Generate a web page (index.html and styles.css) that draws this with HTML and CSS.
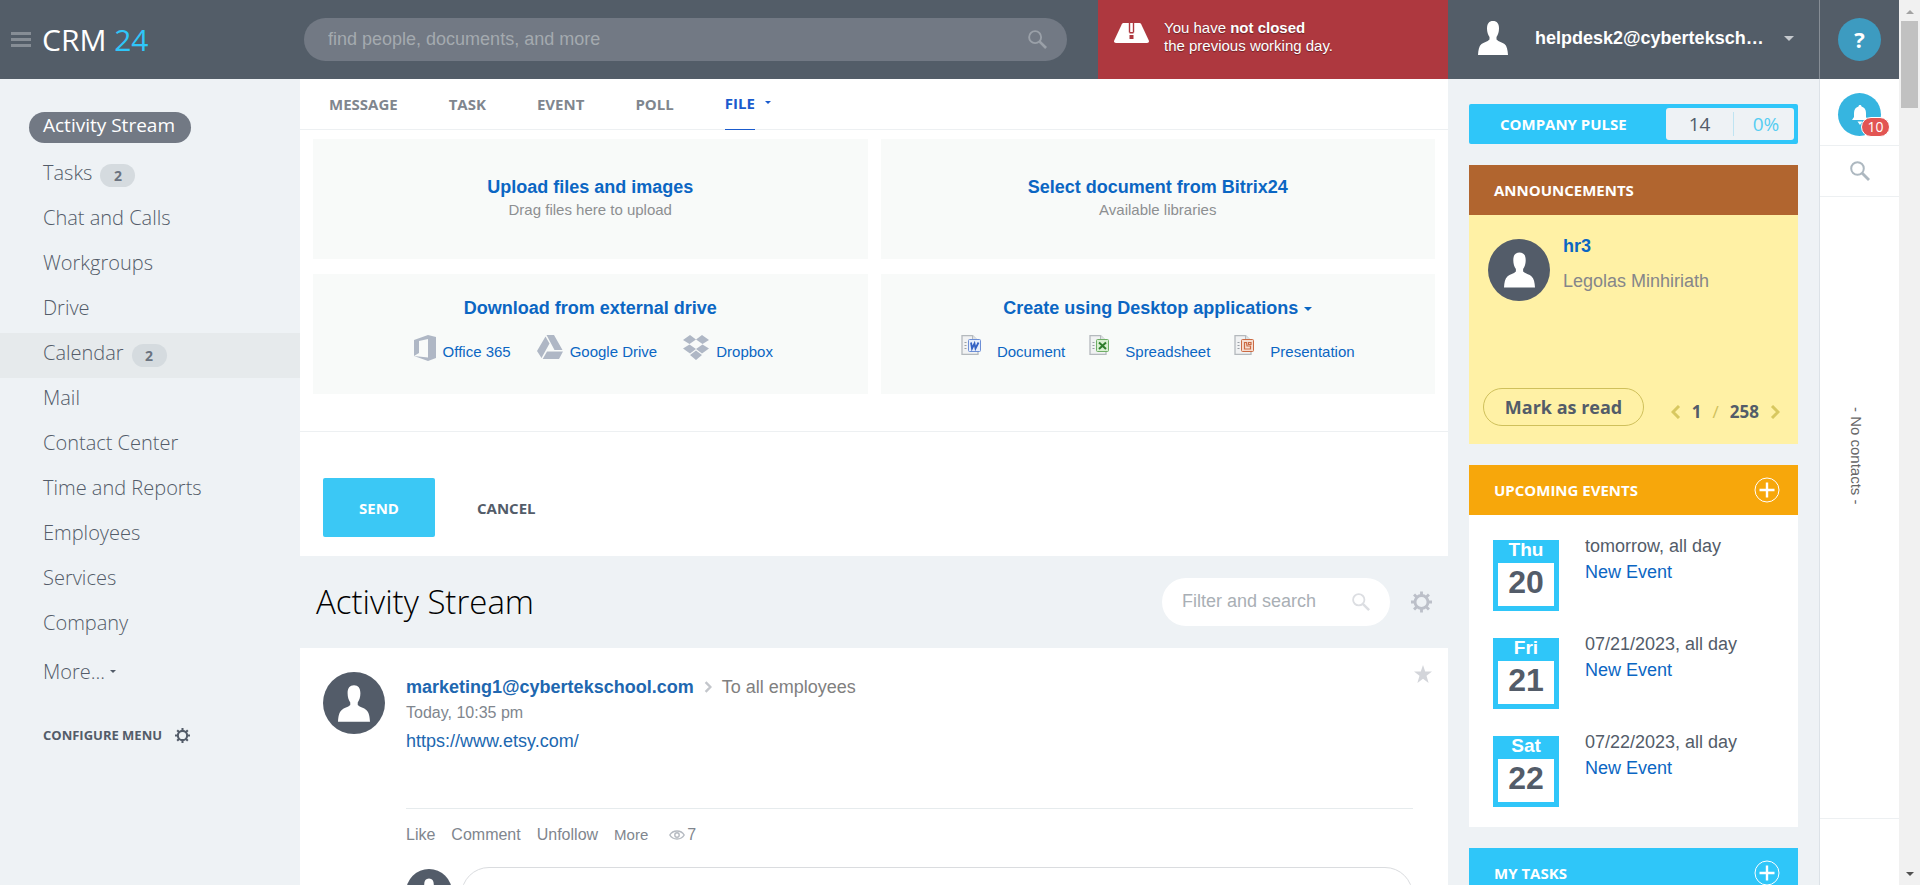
FILE: index.html
```html
<!DOCTYPE html>
<html lang="en">
<head>
<meta charset="utf-8">
<title>Activity Stream</title>
<link rel="stylesheet" href="styles.css">
</head>
<body>
<svg class="defs" width="0" height="0" aria-hidden="true">
  <symbol id="person" viewBox="0 0 30 34"><path d="M9 7.500C9 2.500 11 0 15 0s6 2.500 6 7.500c0 3.500-1 6.500-2.500 8.500v2.500c2 2.200 6 2.800 8 4.500 2.500 2 3.200 6 3.500 11H0c.3-5 1-9 3.500-11 2-1.700 6-2.300 8-4.500V16C10 14 9 11 9 7.500z" fill="#fff"/></symbol>
  <symbol id="glass" viewBox="0 0 20 20"><circle cx="7.500" cy="7.500" r="6.300" fill="none" stroke="currentColor" stroke-width="2"/><path d="M12 12l7 7" stroke="currentColor" stroke-width="2.800"/></symbol>
  <symbol id="gear" viewBox="0 0 22 22"><path d="M11 0v22M0 11h22M3.200 3.200l15.600 15.600M18.800 3.200L3.200 18.800" stroke="currentColor" stroke-width="3"/><circle cx="11" cy="11" r="6.800" fill="var(--page)" stroke="currentColor" stroke-width="3"/></symbol>
  <symbol id="plus" viewBox="0 0 26 26"><circle cx="13" cy="13" r="12" fill="none" stroke="#fff"/><path d="M13 5.500v15M5.500 13h15" stroke="#fff" stroke-width="2.400"/></symbol>
  <symbol id="caret" viewBox="0 0 8 4"><path d="M0 0h8L4 4z" fill="currentColor"/></symbol>
  <symbol id="next" viewBox="0 0 10 14"><path d="M2 1l6 6-6 6" fill="none" stroke="currentColor" stroke-width="3"/></symbol>
  <symbol id="sheet" viewBox="0 0 18 20"><path d="M1 .5h10.500L17 6v13.500H1z" fill="#f1f2f3" stroke="#b4b9bd" stroke-width="1.300"/><path d="M11.500.5V5H17" fill="#dfe2e4" stroke="#b4b9bd"/><path d="M3.500 7.500h2M3.500 10.500h2M3.500 13.500h2" stroke="#9aa0a6"/></symbol>
</svg>

<div class="app">
  <header class="top">
    <div class="brand">
      <button class="burger" aria-label="Toggle menu"><span></span><span></span><span></span></button>
      <a class="logo" href="#">CRM <span>24</span></a>
    </div>
    <div class="top-search">
      <label class="search-pill">
        <input type="text" placeholder="find people, documents, and more" aria-label="Search">
        <svg width="19" height="19"><use href="#glass"/></svg>
      </label>
    </div>
    <a class="alert" href="#">
      <svg class="alert-ico" width="35" height="20" viewBox="0 0 35 20"><path d="M9.500 0h16c.8 0 1.300.4 1.700 1.200l7.500 16c.7 1.600 0 2.800-1.700 2.800H2C.3 20-.4 18.800.3 17.200l7.500-16C8.200.4 8.700 0 9.500 0z" fill="#fff"/><path d="M14.800 0h1.400v9.500h-1.400zM18.800 0h1.400v9.500h-1.400zM15.500 9h4v1.500h-4zM15.500 12h4v4h-4z" fill="#ae383f"/></svg>
      <span>You have <b>not closed</b><br>the previous working day.</span>
    </a>
    <button class="user">
      <svg width="30" height="34"><use href="#person"/></svg>
      <span class="user-name">helpdesk2@cyberteksch…</span>
      <svg class="user-caret" width="10" height="5"><use href="#caret"/></svg>
    </button>
    <div class="help-cell"><button class="help" aria-label="Help">?</button></div>
  </header>

  <div class="columns">
    <nav class="menu">
      <ul>
        <li class="active"><a href="#">Activity Stream</a></li>
        <li><a href="#">Tasks</a><span class="count">2</span></li>
        <li><a href="#">Chat and Calls</a></li>
        <li><a href="#">Workgroups</a></li>
        <li><a href="#">Drive</a></li>
        <li class="hover"><a href="#">Calendar</a><span class="count">2</span></li>
        <li><a href="#">Mail</a></li>
        <li><a href="#">Contact Center</a></li>
        <li><a href="#">Time and Reports</a></li>
        <li><a href="#">Employees</a></li>
        <li><a href="#">Services</a></li>
        <li><a href="#">Company</a></li>
        <li class="more"><a href="#">More...</a><svg width="6" height="3"><use href="#caret"/></svg></li>
      </ul>
      <button class="configure">CONFIGURE MENU <svg width="15" height="15"><use href="#gear"/></svg></button>
    </nav>

    <main class="feed">
      <section class="composer">
        <div class="tabs">
          <button>MESSAGE</button>
          <button>TASK</button>
          <button>EVENT</button>
          <button>POLL</button>
          <button class="on">FILE</button>
          <svg class="tab-caret" width="6" height="3"><use href="#caret"/></svg>
        </div>
        <div class="sources">
          <div class="source tall">
            <a class="source-title" href="#">Upload files and images</a>
            <span class="hint">Drag files here to upload</span>
          </div>
          <div class="source tall">
            <a class="source-title" href="#">Select document from Bitrix24</a>
            <span class="hint">Available libraries</span>
          </div>
          <div class="source">
            <a class="source-title" href="#">Download from external drive</a>
            <div class="links drives">
              <a href="#"><svg width="22" height="26" viewBox="0 0 22 26"><path d="M0 5L14 0l8 2v21l-8 3L0 21l14 1.500V4L5 6v12l-5 3z" fill="#afb7c5"/></svg>Office 365</a>
              <a href="#"><svg width="26" height="24" viewBox="0 0 26 24"><path d="M9.500 0h7.500l8.500 15h-8zM8.500 1.500l4 7L4.500 23 0 16zM10 16.500h16L22 24H5.700z" fill="#afb7c5"/></svg>Google Drive</a>
              <a href="#"><svg width="26" height="25" viewBox="0 0 26 25"><path d="M7 0l6 4.500-6.500 4.500L0 5zM19 0l7 5-6.500 4L13 4.500zM0 13.500L6.500 9.500 13 14l-6 4.500zM19.500 9.500l6.500 4-7 5-6-4.500zM13 15.500l6 4.500-6 5-6-5z" fill="#afb7c5"/></svg>Dropbox</a>
            </div>
          </div>
          <div class="source">
            <a class="source-title" href="#">Create using Desktop applications <svg width="8" height="4"><use href="#caret"/></svg></a>
            <div class="links docs">
              <a href="#"><svg width="20" height="20" viewBox="0 0 20 20"><use href="#sheet" width="18" height="20"/><rect x="7.500" y="4.500" width="12" height="12" rx="1" fill="#e8eefb" stroke="#6d8fd6"/><path d="M10 7.500l1 6 2.500-5 1 5 3-6" fill="none" stroke="#3562c4" stroke-width="1.800"/></svg>Document</a>
              <a href="#"><svg width="20" height="20" viewBox="0 0 20 20"><use href="#sheet" width="18" height="20"/><rect x="7.500" y="4.500" width="12" height="12" rx="1" fill="#d9efd2" stroke="#6fae66"/><path d="M10 7.500l7 6.500M17 7.500L10 14" fill="none" stroke="#2f7d2c" stroke-width="2"/></svg>Spreadsheet</a>
              <a href="#"><svg width="20" height="20" viewBox="0 0 20 20"><use href="#sheet" width="18" height="20"/><rect x="7.500" y="4.500" width="12" height="12" rx="1" fill="#f6ddd0" stroke="#cb6a43"/><path d="M12.500 7.500h-2v6.500h6v-3h-3.500zM14.500 7.500h2.500v2h-2.500z" fill="none" stroke="#cb6a43" stroke-width="1.200"/></svg>Presentation</a>
            </div>
          </div>
        </div>
        <div class="send-row">
          <button class="send">SEND</button>
          <button class="cancel">CANCEL</button>
        </div>
      </section>

      <div class="feed-head">
        <h1>Activity Stream</h1>
        <label class="filter">
          <input type="text" placeholder="Filter and search" aria-label="Filter and search">
          <svg width="18" height="18"><use href="#glass"/></svg>
        </label>
        <button class="gear" aria-label="Settings"><svg width="21" height="22"><use href="#gear"/></svg></button>
      </div>

      <article class="post">
        <span class="avatar"><svg width="32" height="39"><use href="#person"/></svg></span>
        <div class="post-body">
          <div class="post-title"><a href="#">marketing1@cybertekschool.com</a><svg width="8" height="12"><use href="#next"/></svg><span>To all employees</span></div>
          <div class="post-time">Today, 10:35 pm</div>
          <a class="post-link" href="#">https://www.etsy.com/</a>
          <div class="post-actions">
            <a href="#">Like</a><a href="#">Comment</a><a href="#">Unfollow</a><a class="small" href="#">More</a>
            <span class="views"><svg width="16" height="10" viewBox="0 0 16 10"><path d="M.8 5C4-.4 12-.4 15.200 5 12 10.400 4 10.400.8 5z" fill="none" stroke="#b5bac1" stroke-width="1.400"/><circle cx="8" cy="5" r="2.200" fill="none" stroke="#b5bac1" stroke-width="1.400"/></svg>7</span>
          </div>
          <div class="reply">
            <span class="avatar mini"><svg width="24" height="28"><use href="#person"/></svg></span>
            <input type="text" aria-label="Add comment">
          </div>
        </div>
        <button class="star" aria-label="Add to favorites"><svg width="18" height="18" viewBox="0 0 18 18"><path d="M9 0l2.200 6.500H18l-5.500 4.200L14.600 18 9 13.700 3.400 18l2.100-7.300L0 6.500h6.800z" fill="#d3d5da"/></svg></button>
      </article>
    </main>

    <aside class="widgets">
      <section class="pulse">
        <span class="pulse-name">COMPANY PULSE</span>
        <span class="pulse-box"><b>14</b><i>0%</i></span>
      </section>
      <section class="widget">
        <h2 class="brown">ANNOUNCEMENTS</h2>
        <div class="note">
          <div class="note-from">
            <span class="avatar"><svg width="31" height="36"><use href="#person"/></svg></span>
            <div><a href="#">hr3</a><p>Legolas Minhiriath</p></div>
          </div>
          <div class="note-foot">
            <button class="mark">Mark as read</button>
            <div class="pager">
              <button aria-label="Previous"><svg class="flip" width="10" height="14"><use href="#next"/></svg></button>
              <span>1</span><em>/</em><span>258</span>
              <button aria-label="Next"><svg width="10" height="14"><use href="#next"/></svg></button>
            </div>
          </div>
        </div>
      </section>
      <section class="widget">
        <h2 class="orange">UPCOMING EVENTS <button aria-label="Add event"><svg width="26" height="26"><use href="#plus"/></svg></button></h2>
        <div class="events">
          <div class="event"><div class="cal"><span>Thu</span><b>20</b></div><div class="event-text"><p>tomorrow, all day</p><a href="#">New Event</a></div></div>
          <div class="event"><div class="cal"><span>Fri</span><b>21</b></div><div class="event-text"><p>07/21/2023, all day</p><a href="#">New Event</a></div></div>
          <div class="event"><div class="cal"><span>Sat</span><b>22</b></div><div class="event-text"><p>07/22/2023, all day</p><a href="#">New Event</a></div></div>
        </div>
      </section>
      <section class="widget">
        <h2 class="blue">MY TASKS <button aria-label="Add task"><svg width="26" height="26"><use href="#plus"/></svg></button></h2>
      </section>
    </aside>

    <aside class="im">
      <div class="im-bell">
        <button class="bell" aria-label="Notifications"><svg width="16" height="20" viewBox="0 0 16 20"><path d="M8 0c1 0 1.500.7 1.500 1.500C12.500 2.300 14 4.800 14 8v4l2 3H0l2-3V8c0-3.200 1.500-5.700 4.500-6.500C6.500.7 7 0 8 0zM5.500 16.500h5L8 20z" fill="#fff"/></svg></button>
        <span class="badge">10</span>
      </div>
      <button class="im-search" aria-label="Search contacts"><svg width="20" height="20"><use href="#glass"/></svg></button>
      <div class="im-list"><span>- No contacts -</span></div>
      <div class="im-foot"></div>
    </aside>
  </div>
</div>
<div class="scroll" aria-hidden="true">
  <svg class="arrow-up" width="8" height="4"><use href="#caret"/></svg>
  <span class="thumb"></span>
  <svg class="arrow-down" width="8" height="4"><use href="#caret"/></svg>
</div>
</body>
</html>
```
FILE: styles.css
```css
:root {
  --page: #eef2f5;
  --slate: #535c69;
  --head: #535d68;
  --sky: #2fc6f9;
  --link: #0b66c3;
  --line: #edf0f2;
  --sans: "Liberation Sans", Arial, sans-serif;
  --open: "Open Sans", sans-serif;
}
* { box-sizing: border-box; }
body {
  margin: 0;
  height: 100vh;
  display: flex;
  overflow: hidden;
  background: var(--page);
  font: 18px/20px var(--sans);
  color: var(--slate);
}
a { color: var(--link); text-decoration: none; }
button { border: 0; padding: 0; background: none; font: inherit; color: inherit; }
input { border: 0; padding: 0; background: none; font: inherit; outline: 0; min-width: 0; }
p { margin: 0; }
svg { display: block; flex: none; }
.defs { position: absolute; }
.app { flex: 1; min-width: 0; display: flex; flex-direction: column; }

.top { flex: none; height: 79px; display: flex; background: var(--head); color: #fff; }
.brand { width: 300px; display: flex; align-items: center; gap: 11px; padding-left: 11px; }
.burger { display: flex; flex-direction: column; gap: 3px; width: 20px; }
.burger span { height: 3px; background: #868d95; }
.logo { font: 30px/36px var(--open); color: #fff; }
.logo span { color: var(--sky); }
.top-search { flex: 1; padding: 18px 31px 18px 4px; display: flex; }
.search-pill { flex: 1; display: flex; align-items: center; padding: 0 20px 0 24px; border-radius: 22px; background: #727984; color: #9aa0a8; }
.search-pill input { flex: 1; color: #fff; padding-bottom: 2px; }
.search-pill input::placeholder { color: #a4aaaf; opacity: 1; }
.alert { width: 350px; display: flex; gap: 15px; padding: 19px 16px; background: #ae383f; color: #fff; font: 15px/18px var(--sans); text-shadow: 0 1px 1px rgba(0,0,0,.4); }
.alert-ico { margin-top: 4px; }
.user { width: 371px; display: flex; align-items: center; padding: 0 25px 3px 30px; font-weight: bold; }
.user-name { flex: 1; text-align: left; padding-left: 27px; }
.user-caret { color: #c5c9ce; }
.help-cell { width: 80px; border-left: 1px solid #868d95; display: flex; align-items: center; justify-content: center; }
.help { width: 43px; height: 43px; border-radius: 50%; background: #3d9bc0; font: bold 22px/43px var(--open); }

.columns { flex: 1; min-height: 0; display: flex; }
.menu { width: 300px; padding-top: 29px; }
.menu ul { list-style: none; margin: 0; padding: 0; }
.menu li { height: 45px; display: flex; align-items: center; padding: 0 0 6px 43px; gap: 8px; }
.menu a { color: var(--slate); font: 300 20px/26px var(--open); }
.menu .active { padding-left: 29px; }
.menu .active a { background: #727984; color: #fff; border-radius: 16px; padding: 0 16px 5px 14px; font-weight: 400; font-size: 19px; }
.menu .hover { background: #e6eaec; }
.count { width: 35px; height: 23px; margin-top: 6px; border-radius: 12px; background: #d5dbdf; color: #6b7380; font: bold 14px/23px var(--open); text-align: center; }
.menu .more { margin-top: 4px; gap: 5px; }
.configure { display: flex; align-items: center; gap: 13px; margin: 28px 0 0 43px; font: bold 13px/20px var(--open); }

.feed { flex: 1; min-width: 0; display: flex; flex-direction: column; overflow: hidden; }
.composer { background: #fff; flex: none; }
.tabs { height: 51px; display: flex; gap: 51px; padding-left: 29px; border-bottom: 1px solid var(--line); font: bold 15px/20px var(--open); color: #80868e; }
.tabs button { height: 51px; padding-bottom: 2px; }
.tabs .on { color: #1a5bcd; border-bottom: 1px solid #1a5bcd; }
.tab-caret { margin: 22px 0 0 -41px; color: #1a5bcd; }
.sources { display: grid; grid-template-columns: 1fr 1fr; gap: 15px 13px; padding: 9px 13px 37px; border-bottom: 1px solid var(--line); }
.source { height: 120px; background: #f8faf9; display: flex; flex-direction: column; align-items: center; padding-top: 24px; }
.source.tall { padding-top: 38px; }
.source-title { font-weight: bold; line-height: 21px; display: flex; align-items: center; gap: 6px; }
.hint { font-size: 15px; line-height: 24px; color: #8d8f91; }
.links { display: flex; font-size: 15px; line-height: 34px; margin-top: 16px; }
.links a { display: flex; align-items: flex-start; gap: 7px; }
.drives { gap: 26px; padding-left: 6px; }
.docs { gap: 24px; }
.docs a { gap: 16px; }
.send-row { display: flex; align-items: center; gap: 42px; padding: 46px 23px 19px; font: bold 15px/20px var(--open); }
.send { width: 112px; height: 59px; border-radius: 2px; background: #3bc8f5; color: #fff; }

.feed-head { flex: none; height: 92px; display: flex; align-items: center; padding: 0 16px; }
h1 { flex: 1; margin: 0; font: 300 33px/44px var(--open); color: #000; }
.filter { width: 228px; height: 48px; border-radius: 24px; background: #fff; display: flex; align-items: center; padding: 0 20px; color: #dcdee2; margin-right: 21px; }
.filter input { flex: 1; padding-bottom: 2px; }
.filter input::placeholder { color: #a9afb5; opacity: 1; }
.gear { color: #bcc0c9; }

.post { position: relative; flex: 1; min-height: 240px; background: #fff; display: flex; gap: 21px; padding: 24px 35px 0 23px; }
.avatar { flex: none; width: 62px; height: 62px; border-radius: 50%; background: var(--slate); display: flex; align-items: center; justify-content: center; }
.post-body { flex: 1; min-width: 0; }
.post-title { display: flex; align-items: center; gap: 10px; line-height: 22px; padding-top: 4px; color: #808080; }
.post-title a { font-weight: bold; color: #2067b0; }
.post-title svg { color: #c3c6cb; }
.post-time { font-size: 16px; line-height: 30px; color: #80868e; }
.post-link { display: block; color: #2067b0; height: 80px; line-height: 26px; }
.post-actions { display: flex; align-items: center; gap: 16px; border-top: 1px solid #e6ebed; height: 53px; font-size: 16px; }
.post-actions a, .views { color: #80868e; }
.post-actions .small { font-size: 15px; }
.views { display: flex; align-items: center; gap: 2px; margin-left: 5px; }
.reply { display: flex; gap: 9px; margin-top: 6px; }
.mini { width: 46px; height: 46px; margin-top: 2px; }
.reply input { flex: 1; height: 60px; border: 1px solid #dadcdf; border-radius: 28px; }
.star { position: absolute; top: 17px; right: 16px; }

.widgets { width: 371px; padding: 25px 21px 0; display: flex; flex-direction: column; gap: 21px; overflow: hidden; }
.widgets > section { flex: none; }
.pulse { display: flex; align-items: center; height: 40px; padding: 4px 4px 4px 31px; border-radius: 2px; background: var(--sky); color: #fff; }
.pulse-name { flex: 1; font: bold 15px/20px var(--open); }
.pulse-box { width: 128px; height: 32px; display: flex; align-items: center; border-radius: 3px; background: var(--page); text-align: center; font: 19px/24px var(--open); color: var(--slate); }
.pulse-box b, .pulse-box i { font-weight: 400; font-style: normal; }
.pulse-box b { flex: 1; }
.pulse-box i { width: 61px; padding-left: 4px; border-left: 1px solid #bfe4f2; color: #56cdf2; }
h2 { margin: 0; height: 50px; display: flex; align-items: center; justify-content: space-between; padding: 0 18px 0 25px; font: bold 15px/20px var(--open); color: #fff; }
.brown { background: #b1652f; }
.orange { background: #f7a70b; }
.blue { background: var(--sky); }
.note { min-height: 229px; display: flex; flex-direction: column; justify-content: space-between; padding: 24px 18px 18px 14px; background: #fff1a5; }
.note-from { display: flex; gap: 13px; padding-left: 5px; }
.note-from a { display: block; font-weight: bold; line-height: 15px; }
.note-from p { margin-top: 17px; color: #85868a; }
.note-foot { display: flex; justify-content: space-between; align-items: center; }
.mark { width: 161px; height: 38px; border: 1px solid #cfc05b; border-radius: 19px; font: bold 18px/30px var(--open); }
.pager { display: flex; align-items: center; gap: 11px; padding-top: 9px; font: bold 17px/20px var(--open); }
.pager em { font-style: normal; font-weight: 400; color: #cfc05b; }
.pager svg { color: #d8c860; }
.flip { transform: scaleX(-1); }
.events { background: #fff; display: flex; flex-direction: column; gap: 27px; padding: 25px 24px 20px; }
.event { display: flex; gap: 26px; }
.cal { width: 66px; height: 71px; display: flex; flex-direction: column; background: var(--sky); padding: 0 5px 5px; text-align: center; color: #fff; font-weight: bold; font-size: 19px; line-height: 20px; }
.cal span { height: 23px; }
.cal b { flex: 1; background: #fff; color: var(--slate); font-size: 32px; line-height: 38px; }
.event-text { line-height: 26px; }
.event-text p { margin-top: -7px; }

.im { width: 80px; border-left: 1px solid #dce2e7; background: #fff; display: flex; flex-direction: column; align-items: stretch; }
.im-bell { position: relative; height: 67px; border-bottom: 1px solid var(--line); padding: 14px 0 0 18px; }
.bell { width: 43px; height: 43px; border-radius: 50%; background: #36b5e0; display: flex; align-items: center; justify-content: center; }
.badge { position: absolute; left: 41px; top: 38px; width: 29px; height: 20px; border: 1px solid #fff; border-radius: 10px; background: #e25553; color: #fff; font: 14px/18px var(--open); text-align: center; }
.im-search { height: 51px; border-bottom: 1px solid var(--line); display: flex; align-items: center; justify-content: center; color: #adb8c0; }
.im-list { flex: 1; display: flex; justify-content: center; padding: 210px 8px 0 0; font-size: 15px; color: #666; }
.im-list span { writing-mode: vertical-rl; }
.im-foot { height: 67px; border-top: 1px solid var(--line); }

.scroll { width: 21px; background: #f1f1f1; display: flex; flex-direction: column; align-items: center; color: #505050; }
.arrow-up { margin: 10px 0 7px; transform: scaleY(-1); color: #a3a3a3; }
.thumb { width: 17px; height: 87px; background: #c1c1c1; }
.arrow-down { margin: auto 0 9px; }
```
